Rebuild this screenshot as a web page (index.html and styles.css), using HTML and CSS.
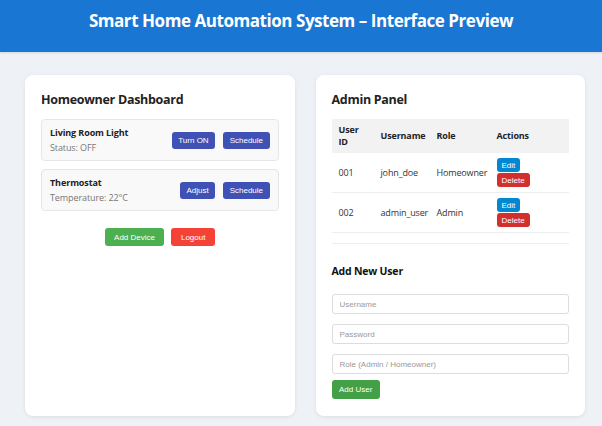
FILE: index.html
```html
<!DOCTYPE html>
<html lang="en">
<head>
<meta charset="utf-8">
<title>Smart Home Automation System</title>
<link rel="stylesheet" href="styles.css">
</head>
<body>
<header class="topbar">
  <h1 class="topbar-title">Smart Home Automation System – Interface Preview</h1>
</header>
<main class="layout">
  <section class="card">
    <h2 class="card-title">Homeowner Dashboard</h2>
    <div class="device">
      <div class="device-info">
        <div class="device-name">Living Room Light</div>
        <div class="device-status">Status: OFF</div>
      </div>
      <div class="device-actions">
        <button class="btn btn-indigo">Turn ON</button>
        <button class="btn btn-indigo">Schedule</button>
      </div>
    </div>
    <div class="device">
      <div class="device-info">
        <div class="device-name">Thermostat</div>
        <div class="device-status">Temperature: 22°C</div>
      </div>
      <div class="device-actions">
        <button class="btn btn-indigo">Adjust</button>
        <button class="btn btn-indigo">Schedule</button>
      </div>
    </div>
    <div class="dash-actions">
      <button class="btn btn-lg btn-green">Add Device</button>
      <button class="btn btn-lg btn-red">Logout</button>
    </div>
  </section>

  <section class="card">
    <h2 class="card-title">Admin Panel</h2>
    <table class="users">
      <colgroup>
        <col class="col-id"><col class="col-name"><col class="col-role"><col class="col-act">
      </colgroup>
      <thead>
        <tr><th>User ID</th><th>Username</th><th>Role</th><th>Actions</th></tr>
      </thead>
      <tbody>
        <tr>
          <td>001</td><td>john_doe</td><td>Homeowner</td>
          <td><div class="row-actions"><button class="btn btn-sm btn-blue">Edit</button><button class="btn btn-sm btn-darkred">Delete</button></div></td>
        </tr>
        <tr>
          <td>002</td><td>admin_user</td><td>Admin</td>
          <td><div class="row-actions"><button class="btn btn-sm btn-blue">Edit</button><button class="btn btn-sm btn-darkred">Delete</button></div></td>
        </tr>
      </tbody>
    </table>
    <div class="add-user">
      <h3 class="sub-title">Add New User</h3>
      <input class="field" type="text" placeholder="Username">
      <input class="field" type="password" placeholder="Password">
      <input class="field" type="text" placeholder="Role (Admin / Homeowner)">
      <button class="btn btn-md btn-green2">Add User</button>
    </div>
  </section>
</main>
</body>
</html>
```

FILE: styles.css
```css
* { box-sizing: border-box; }

body {
  margin: 0;
  background: #eef2f7;
  font-family: "Open Sans", "Noto Sans", sans-serif;
  color: #333;
}

.topbar {
  height: 52px;
  background: #1976d2;
  color: #fff;
  text-align: center;
  padding-top: 9px;
  box-shadow: 0 1px 2px rgba(0, 0, 0, 0.12);
}

.topbar-title {
  margin: 0;
  font-size: 17px;
  font-weight: 700;
  line-height: 24px;
  letter-spacing: -0.45px;
}

.layout {
  display: flex;
  gap: 21px;
  height: 374px;
  padding: 23px 17px 10px 25px;
}

.card {
  flex: 1;
  background: #fff;
  border-radius: 8px;
  box-shadow: 0 1px 4px rgba(0, 0, 0, 0.08);
  padding: 16px;
}

.card-title {
  margin: 0 0 10px;
  font-size: 12.5px;
  line-height: 18px;
  font-weight: 700;
  letter-spacing: -0.3px;
  color: #222;
}

.device {
  display: flex;
  justify-content: space-between;
  align-items: center;
  height: 42px;
  padding: 0 8px 0 8px;
  margin-bottom: 8px;
  background: #f9f9f9;
  border: 1px solid #e6e6e6;
  border-radius: 4px;
}

.device-name {
  font-size: 9px;
  line-height: 12px;
  font-weight: 700;
  letter-spacing: -0.1px;
  color: #222;
}

.device-status {
  margin-top: 3px;
  font-size: 9px;
  line-height: 12px;
  letter-spacing: -0.1px;
  color: #777;
}

.device-actions {
  display: flex;
  gap: 8px;
}

.btn {
  border: none;
  border-radius: 3px;
  color: #fff;
  font-family: "Liberation Sans", Arial, sans-serif;
  font-size: 8px;
  height: 17px;
  padding: 0 6.5px;
  cursor: pointer;
}

.btn-indigo { background: #3f51b5; }
.btn-green { background: #4caf50; }
.btn-red { background: #f44336; }
.btn-green2 { background: #43a047; }
.btn-blue { background: #0288d1; }
.btn-darkred { background: #d32f2f; }

.btn-lg {
  height: 18px;
  padding: 0 9.5px;
}

.btn-sm {
  height: 14px;
  padding: 0 5px;
}

.btn-md {
  height: 19px;
  padding: 0 7.5px;
}

.dash-actions {
  display: flex;
  justify-content: center;
  gap: 7px;
  margin-top: 17px;
}

.users {
  width: 100%;
  border-collapse: collapse;
  table-layout: fixed;
  font-size: 9px;
  letter-spacing: -0.15px;
}

.col-id { width: 42px; }
.col-name { width: 56px; }
.col-role { width: 60px; }

.users th {
  background: #f2f2f2;
  text-align: left;
  font-weight: 700;
  line-height: 12px;
  padding: 5px 7px;
  color: #222;
}

.users td {
  padding: 5px 7px;
  line-height: 12px;
  border-bottom: 1px solid #eee;
  white-space: nowrap;
}

.row-actions {
  display: flex;
  flex-direction: column;
  align-items: flex-start;
  gap: 1px;
}

.add-user {
  display: flex;
  flex-direction: column;
  align-items: flex-start;
  margin-top: 10px;
  padding-top: 20px;
  border-top: 1px solid #eee;
}

.sub-title {
  margin: 0 0 15px;
  font-size: 10.5px;
  line-height: 15px;
  font-weight: 700;
  letter-spacing: -0.2px;
  color: #111;
}

.field {
  width: 100%;
  height: 20px;
  margin: 0 0 10px;
  padding: 0 7px;
  border: 1px solid #ddd;
  border-radius: 3px;
  font-family: "Liberation Sans", Arial, sans-serif;
  font-size: 8px;
  color: #333;
  background: #fff;
}

.field::placeholder { color: #999; }

.field:last-of-type { margin-bottom: 6px; }
```
